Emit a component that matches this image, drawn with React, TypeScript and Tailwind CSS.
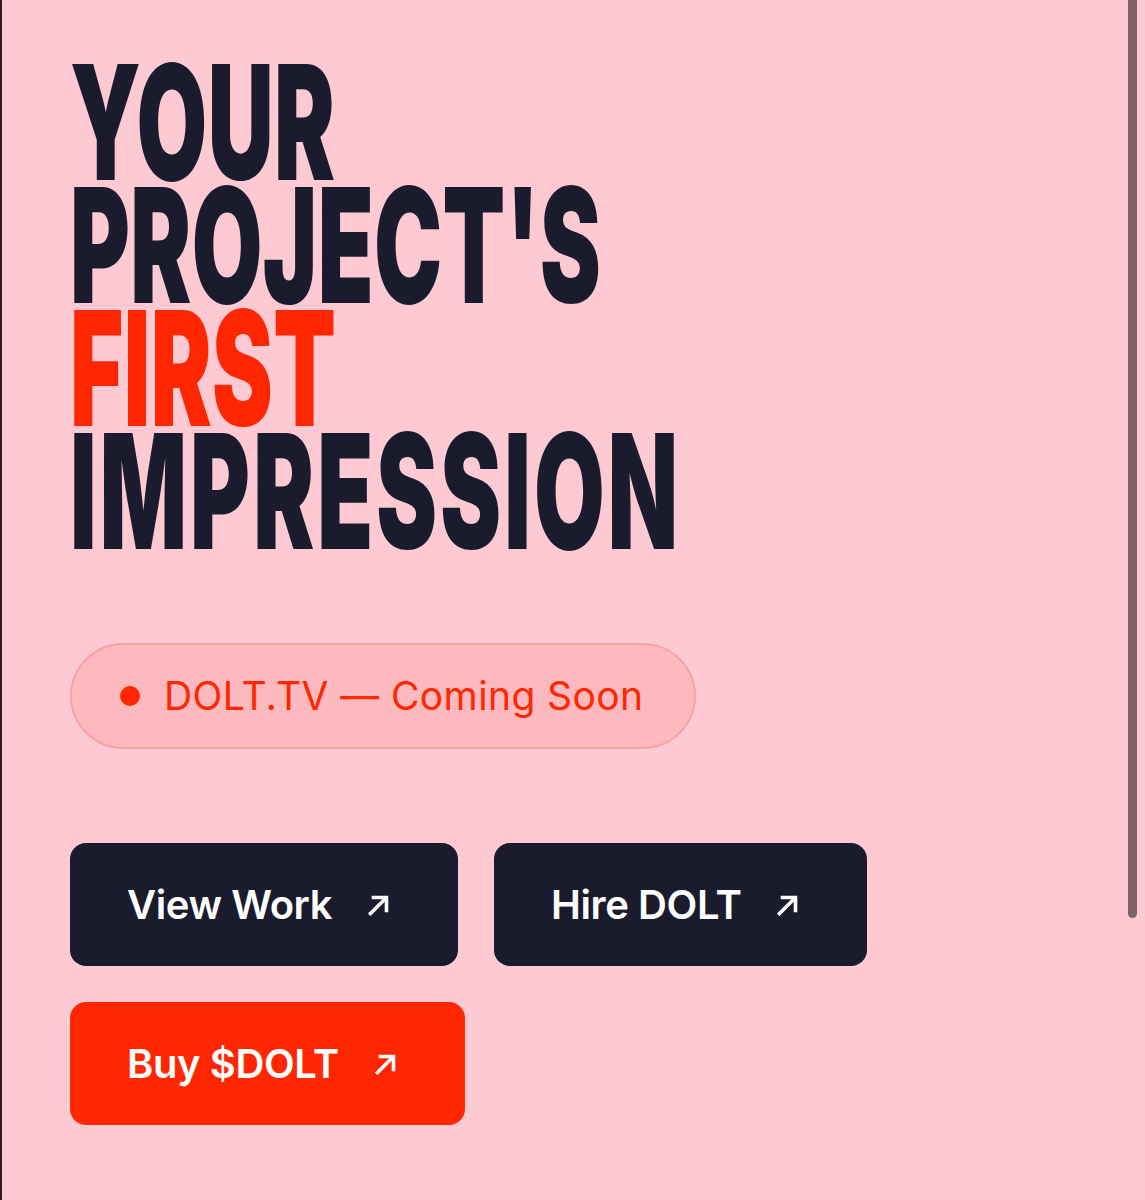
type BtnProps = {
    label: string;
    red?: boolean;
}

function Arrow() {
    return (
        <svg width="24" height="24" viewBox="0 0 24 24" fill="none" stroke="currentColor" strokeWidth="3.6" strokeLinecap="square" strokeLinejoin="miter" className="shrink-0">
            <path d="M3.5 20.5 L18.5 5.5" />
            <path d="M6.5 4.5 H19.5 V17.5" />
        </svg>
    )
}

function ActionButton({ label, red }: BtnProps) {
    return (
        <a
            href="#"
            className={`flex h-[123px] items-center gap-[35px] rounded-[16px] pl-[57px] pr-[67px] text-[40px] font-semibold text-white ${red ? 'bg-[#ff2600]' : 'bg-[#1b1b2e]'}`}
        >
            <span className="tracking-[-0.01em]">{label}</span>
            <Arrow />
        </a>
    )
}

// condensed display line, the font is squeezed horizontally
function HeadLine({ text, red, wide }: { text: string; red?: boolean; wide?: boolean }) {
    return (
        <div className="h-[123px]">
            <span
                className={`inline-block origin-top-left scale-x-[0.57] text-[160px] font-black leading-[123px] ${wide ? 'tracking-[0.035em]' : 'tracking-[0.005em]'} ${red ? 'text-[#ff2600]' : 'text-[#1b1b2e]'}`}
            >
                {text}
            </span>
        </div>
    )
}

export default function App() {
    return (
        <div className="relative min-h-[1200px] w-full overflow-hidden border-l-2 border-[#2b1c24] bg-[#fdc9d2] font-['Inter','Liberation_Sans',sans-serif]">
            {/* overlay scrollbar thumb */}
            <div className="absolute right-[8px] top-[-8px] h-[926px] w-[9px] rounded-full bg-[#7b6469]" />

            <main className="flex flex-col pl-[68px] pt-[61px]">
                <h1 className="flex flex-col">
                    <HeadLine text="YOUR" />
                    <HeadLine text="PROJECT'S" />
                    <HeadLine text="FIRST" red />
                    <HeadLine text="IMPRESSION" wide />
                </h1>

                <div className="mt-[90px] flex h-[106px] w-[626px] items-center gap-[24px] rounded-full border-2 border-[#f6a3a6] bg-[#fdb9bd] pl-[48px] text-[39px] tracking-[0.01em] text-[#ff2600]">
                    <span className="h-[20px] w-[20px] shrink-0 rounded-full bg-[#ff2600]" />
                    <span>DOLT.TV — Coming Soon</span>
                </div>

                <div className="mt-[94px] flex flex-col gap-[36px]">
                    <div className="flex gap-[36px]">
                        <ActionButton label="View Work" />
                        <ActionButton label="Hire DOLT" />
                    </div>
                    <div className="flex">
                        <ActionButton label="Buy $DOLT" red />
                    </div>
                </div>
            </main>
        </div>
    )
}
